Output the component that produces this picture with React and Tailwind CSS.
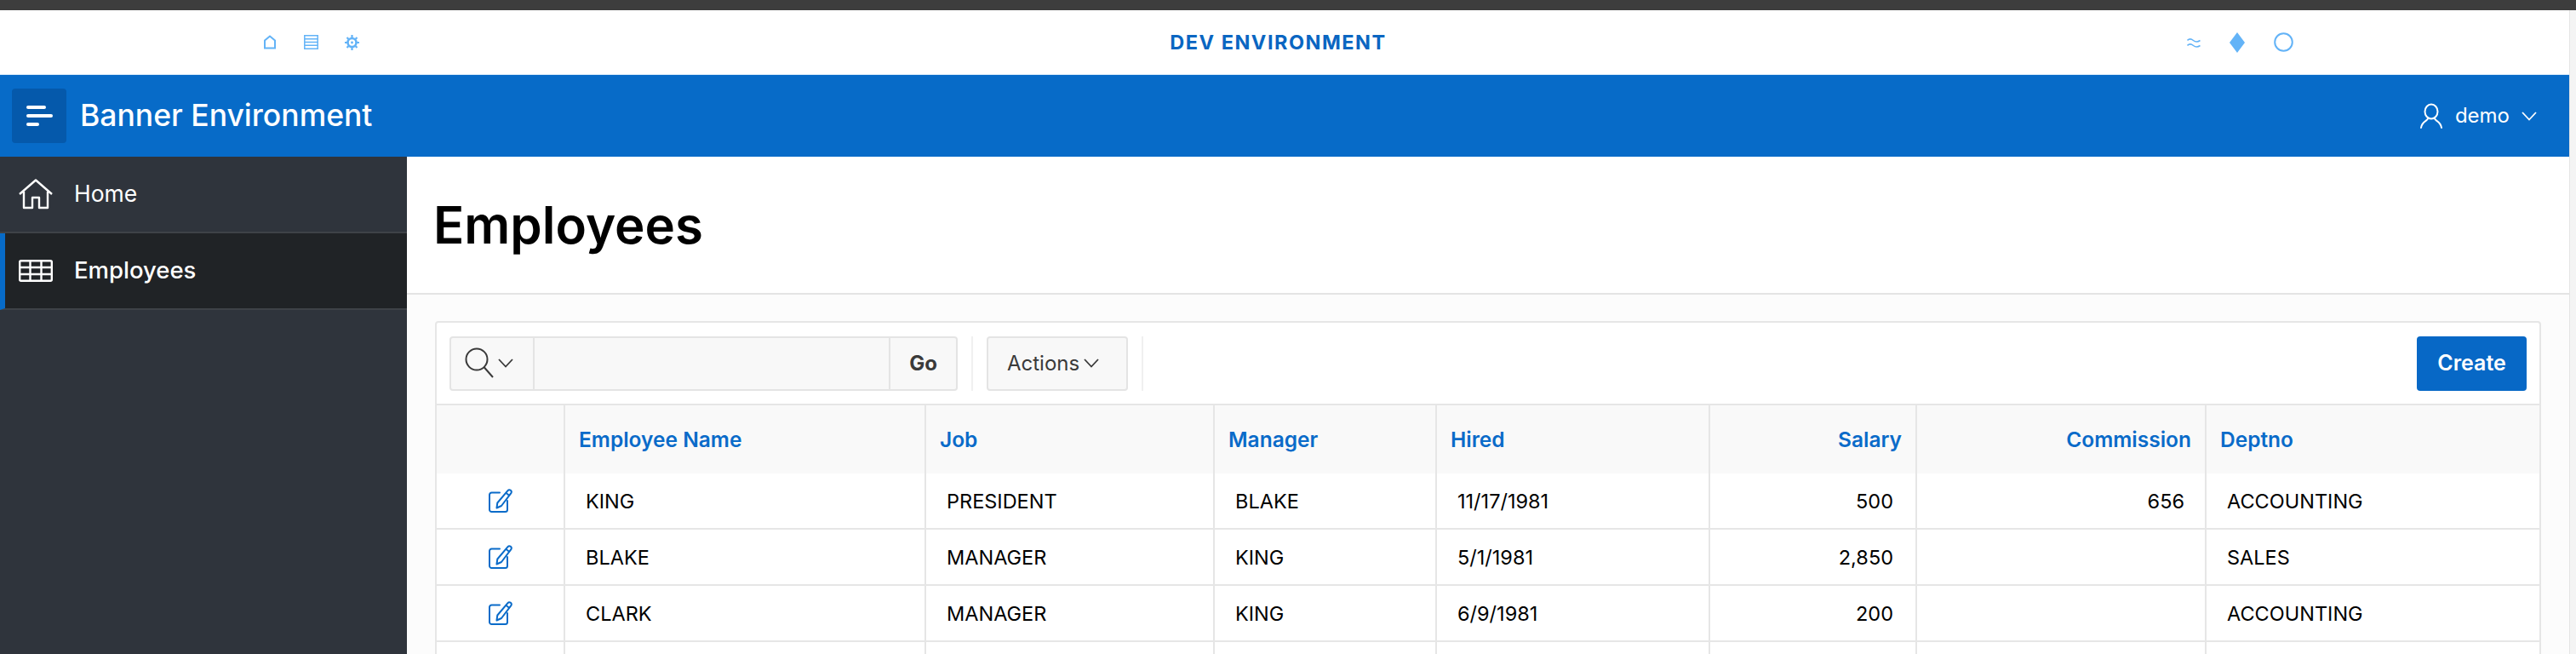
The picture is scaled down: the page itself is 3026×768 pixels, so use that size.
const rows = [
  { name: "KING", job: "PRESIDENT", mgr: "BLAKE", hired: "11/17/1981", sal: "500", comm: "656", dept: "ACCOUNTING" },
  { name: "BLAKE", job: "MANAGER", mgr: "KING", hired: "5/1/1981", sal: "2,850", comm: "", dept: "SALES" },
  { name: "CLARK", job: "MANAGER", mgr: "KING", hired: "6/9/1981", sal: "200", comm: "", dept: "ACCOUNTING" },
  { name: "", job: "", mgr: "", hired: "", sal: "", comm: "", dept: "" },
];

function Chevron() {
  return (
    <svg width="18" height="11" viewBox="0 0 18 11" fill="none" stroke="currentColor" strokeWidth="1.800" className="shrink-0">
      <path d="M1 1l8 8.500L17 1" />
    </svg>
  );
}

function EditIcon() {
  return (
    <svg width="28" height="28" viewBox="0 0 28 28" fill="none" stroke="#0a6bc9" strokeWidth="2" className="mx-auto">
      <path d="M13 4.500H3.500A2.500 2.500 0 0 0 1 7v17.500A2.500 2.500 0 0 0 3.500 27h16a2.500 2.500 0 0 0 2.500-2.500V14" strokeLinecap="round" />
      <path d="M22.500 2.200a2.400 2.400 0 0 1 4 2.600L15 20l-5.500 2.500.8-6z" strokeLinejoin="round" />
      <path d="M20.500 5l4 3" />
    </svg>
  );
}

function TopGlyphs() {
  return (
    <div className="flex items-center">
      <svg width="14" height="17" viewBox="0 0 14 17" fill="none" stroke="#63b3f7" strokeWidth="2" className="mr-[33px]">
        <path d="M1 15.500V6.500L7 1.500l6 5v9z" />
      </svg>
      <svg width="17" height="17" viewBox="0 0 17 17" fill="none" stroke="#63b3f7" strokeWidth="1.500" className="mr-[31px]">
        <path d="M.800.800h15.400v15.400H.800zM1 4.700h15M1 8.500h15M1 12.300h15" />
      </svg>
      <svg width="17" height="18" viewBox="0 0 17 18" fill="none" stroke="#63b3f7">
        <circle cx="8.500" cy="9" r="5" strokeWidth="2.600" />
        <circle cx="8.500" cy="9" r="1.400" fill="#63b3f7" stroke="none" />
        <path d="M8.500 0v3M8.500 15v3M0 9h3M14 9h3M2.500 3l2 2M12.500 13l2 2M14.500 3l-2 2M4.500 13l-2 2" strokeWidth="2.200" />
      </svg>
    </div>
  );
}

function RightGlyphs() {
  return (
    <div className="flex items-center">
      <svg width="16" height="16" viewBox="0 0 16 16" fill="none" stroke="#63b3f7" strokeWidth="1.600" className="mr-[34px]">
        <path d="M.500 5.500c2-2 4.500-2 7 0s5 2 8 0M.500 11.500c2-2 4.500-2 7 0s5 2 8 0" />
      </svg>
      <svg width="18" height="24" viewBox="0 0 18 24" fill="#63b3f7" className="mr-[34px]">
        <path d="M9 0l9 12-9 12-9-12z" />
      </svg>
      <svg width="23" height="23" viewBox="0 0 23 23" fill="none" stroke="#63b3f7" strokeWidth="2">
        <circle cx="11.500" cy="11.500" r="10.300" />
      </svg>
    </div>
  );
}

export default function App() {
  return (
    <div className="h-screen overflow-hidden flex flex-col bg-white font-['Inter',sans-serif] text-black">
      <div className="h-3 shrink-0 bg-[#3d3d3d]" />
      <div className="flex flex-1 min-h-0">
        <div className="flex-1 min-w-0 flex flex-col">
          {/* Dev banner */}
          <div className="h-[76px] shrink-0 border-b border-[#d9ecfb] flex items-center justify-between pl-[310px] pr-[324px]">
            <TopGlyphs />
            <span className="relative left-[6px] text-[23.5px] font-bold tracking-[1.5px] text-[#0a66c2]">DEV ENVIRONMENT</span>
            <RightGlyphs />
          </div>

          {/* Header */}
          <header className="h-24 shrink-0 bg-[#076bc8] flex items-center justify-between pl-[14px] pr-[38px] text-white">
            <div className="flex items-center gap-4">
              <button className="w-16 h-16 rounded bg-[#0559ab] flex flex-col gap-[6px] pl-[17px] justify-center">
                <span className="block w-[23px] h-[4px] rounded-full bg-white" />
                <span className="block w-[31px] h-[4px] rounded-full bg-white" />
                <span className="block w-[15px] h-[4px] rounded-full bg-white" />
              </button>
              <span className="text-[35.5px] font-medium">Banner Environment</span>
            </div>
            <div className="flex items-center">
              <svg width="26" height="30" viewBox="0 0 26 30" fill="none" stroke="white" strokeWidth="2" strokeLinecap="round" className="mr-[15px]">
                <ellipse cx="13" cy="10" rx="7.500" ry="8.500" />
                <path d="M9 18c0 3-7 3-8 11M17 18c0 3 7 3 8 11" />
              </svg>
              <span className="text-[24px] mr-[14px]">demo</span>
              <Chevron />
            </div>
          </header>

          <div className="flex flex-1 min-h-0">
            {/* Side nav */}
            <nav className="w-[478px] shrink-0 bg-[#2f343c] text-white">
              <div className="h-[90px] border-b-2 border-[#3e4247] flex items-center pl-[22px] gap-[25px] text-[26.5px]">
                <svg width="40" height="36" viewBox="0 0 40 36" fill="none" stroke="white" strokeWidth="2.400" strokeLinejoin="round" className="shrink-0">
                  <path d="M1 18L20 1.500 39 18M6 15v19h10V22h8v12h10V15" />
                </svg>
                <span>Home</span>
              </div>
              <div className="h-[90px] border-b-2 border-[#3e4247] border-l-[6px] border-l-[#076bc8] bg-[#202326] flex items-center pl-4 gap-[25px] font-medium text-[27.5px]">
                <svg width="40" height="26" viewBox="0 0 40 26" fill="none" stroke="white" strokeWidth="2.400" className="shrink-0">
                  <rect x="1.200" y="1.200" width="37.600" height="23.600" rx="1.500" />
                  <path d="M1 9h38M1 17h38M13.500 1v24M26.500 1v24" />
                </svg>
                <span>Employees</span>
              </div>
            </nav>

            {/* Page body */}
            <main className="flex-1 min-w-0 bg-[#fcfcfc]">
              <div className="h-[162px] bg-white border-b-2 border-[#e4e4e4] flex items-center pl-[31px]">
                <h1 className="text-[60px] font-semibold">Employees</h1>
              </div>

              <section className="mt-[31px] mx-[33px] bg-white border-2 border-b-0 border-[#e6e6e6] rounded-t">
                {/* Toolbar */}
                <div className="h-[97px] border-b-2 border-[#e6e6e6] flex items-center pl-[15px] pr-[15px]">
                  <div className="flex h-16 bg-[#f8f8f8] border-2 border-[#e4e4e4] rounded">
                    <div className="w-[98px] border-r-2 border-[#e4e4e4] flex items-center pl-4 gap-[1px] text-[#3a3a3a]">
                      <svg width="38" height="38" viewBox="0 0 38 38" fill="none" stroke="currentColor" strokeWidth="2" className="shrink-0">
                        <circle cx="14" cy="14" r="12.500" />
                        <path d="M22.500 23L33 35" />
                      </svg>
                      <Chevron />
                    </div>
                    <div className="w-[418px] border-r-2 border-[#e4e4e4]" />
                    <div className="w-[77px] flex items-center justify-center text-[24px] font-bold text-[#3a3a3a]">Go</div>
                  </div>
                  <div className="w-[2px] h-16 bg-[#f0f0f0] ml-4" />
                  <div className="h-16 w-[166px] ml-4 bg-[#f8f8f8] border-2 border-[#e4e4e4] rounded flex items-center pl-[22px] gap-[5px] text-[24px] text-[#3a3a3a]">
                    Actions
                    <Chevron />
                  </div>
                  <div className="w-[2px] h-16 bg-[#f0f0f0] ml-4" />
                  <button className="ml-auto h-16 w-[129px] bg-[#0768c6] rounded text-white text-[25px] font-semibold">Create</button>
                </div>

                {/* Report */}
                <table className="w-full table-fixed border-separate border-spacing-0 text-[23.5px]">
                  <colgroup>
                    <col className="w-[151px]" />
                    <col className="w-[424px]" />
                    <col className="w-[339px]" />
                    <col className="w-[261px]" />
                    <col className="w-[321px]" />
                    <col className="w-[243px]" />
                    <col className="w-[340px]" />
                    <col />
                  </colgroup>
                  <thead>
                    <tr className="h-20 bg-[#f9f9f9] text-[#0a6bc9] text-[24.5px]">
                      <th className="border-r-2 border-[#e6e6e6]" />
                      <th className="border-r-2 border-[#e6e6e6] px-4 text-left font-semibold">Employee Name</th>
                      <th className="border-r-2 border-[#e6e6e6] px-4 text-left font-semibold">Job</th>
                      <th className="border-r-2 border-[#e6e6e6] px-4 text-left font-semibold">Manager</th>
                      <th className="border-r-2 border-[#e6e6e6] px-4 text-left font-semibold">Hired</th>
                      <th className="border-r-2 border-[#e6e6e6] px-4 text-right font-semibold">Salary</th>
                      <th className="border-r-2 border-[#e6e6e6] px-4 text-right font-semibold">Commission</th>
                      <th className="px-4 text-left font-semibold">Deptno</th>
                    </tr>
                  </thead>
                  <tbody>
                    {rows.map((r, i) => (
                      <tr key={i} className="h-[66px]">
                        <td className="border-r-2 border-b-2 border-[#e6e6e6]">{r.name && <EditIcon />}</td>
                        <td className="border-r-2 border-b-2 border-[#e6e6e6] px-6 pt-[2px]">{r.name}</td>
                        <td className="border-r-2 border-b-2 border-[#e6e6e6] px-6 pt-[2px]">{r.job}</td>
                        <td className="border-r-2 border-b-2 border-[#e6e6e6] px-6 pt-[2px]">{r.mgr}</td>
                        <td className="border-r-2 border-b-2 border-[#e6e6e6] px-6 pt-[2px]">{r.hired}</td>
                        <td className="border-r-2 border-b-2 border-[#e6e6e6] pl-6 pr-[26px] pt-[2px] text-right">{r.sal}</td>
                        <td className="border-r-2 border-b-2 border-[#e6e6e6] px-6 pt-[2px] text-right">{r.comm}</td>
                        <td className="border-b-2 border-[#e6e6e6] px-6 pt-[2px]">{r.dept}</td>
                      </tr>
                    ))}
                  </tbody>
                </table>
              </section>
            </main>
          </div>
        </div>

        {/* Scrollbar strip */}
        <div className="w-2 shrink-0 bg-[#f4f4f4] border-l border-[#e4e4e4]" />
      </div>
    </div>
  );
}
